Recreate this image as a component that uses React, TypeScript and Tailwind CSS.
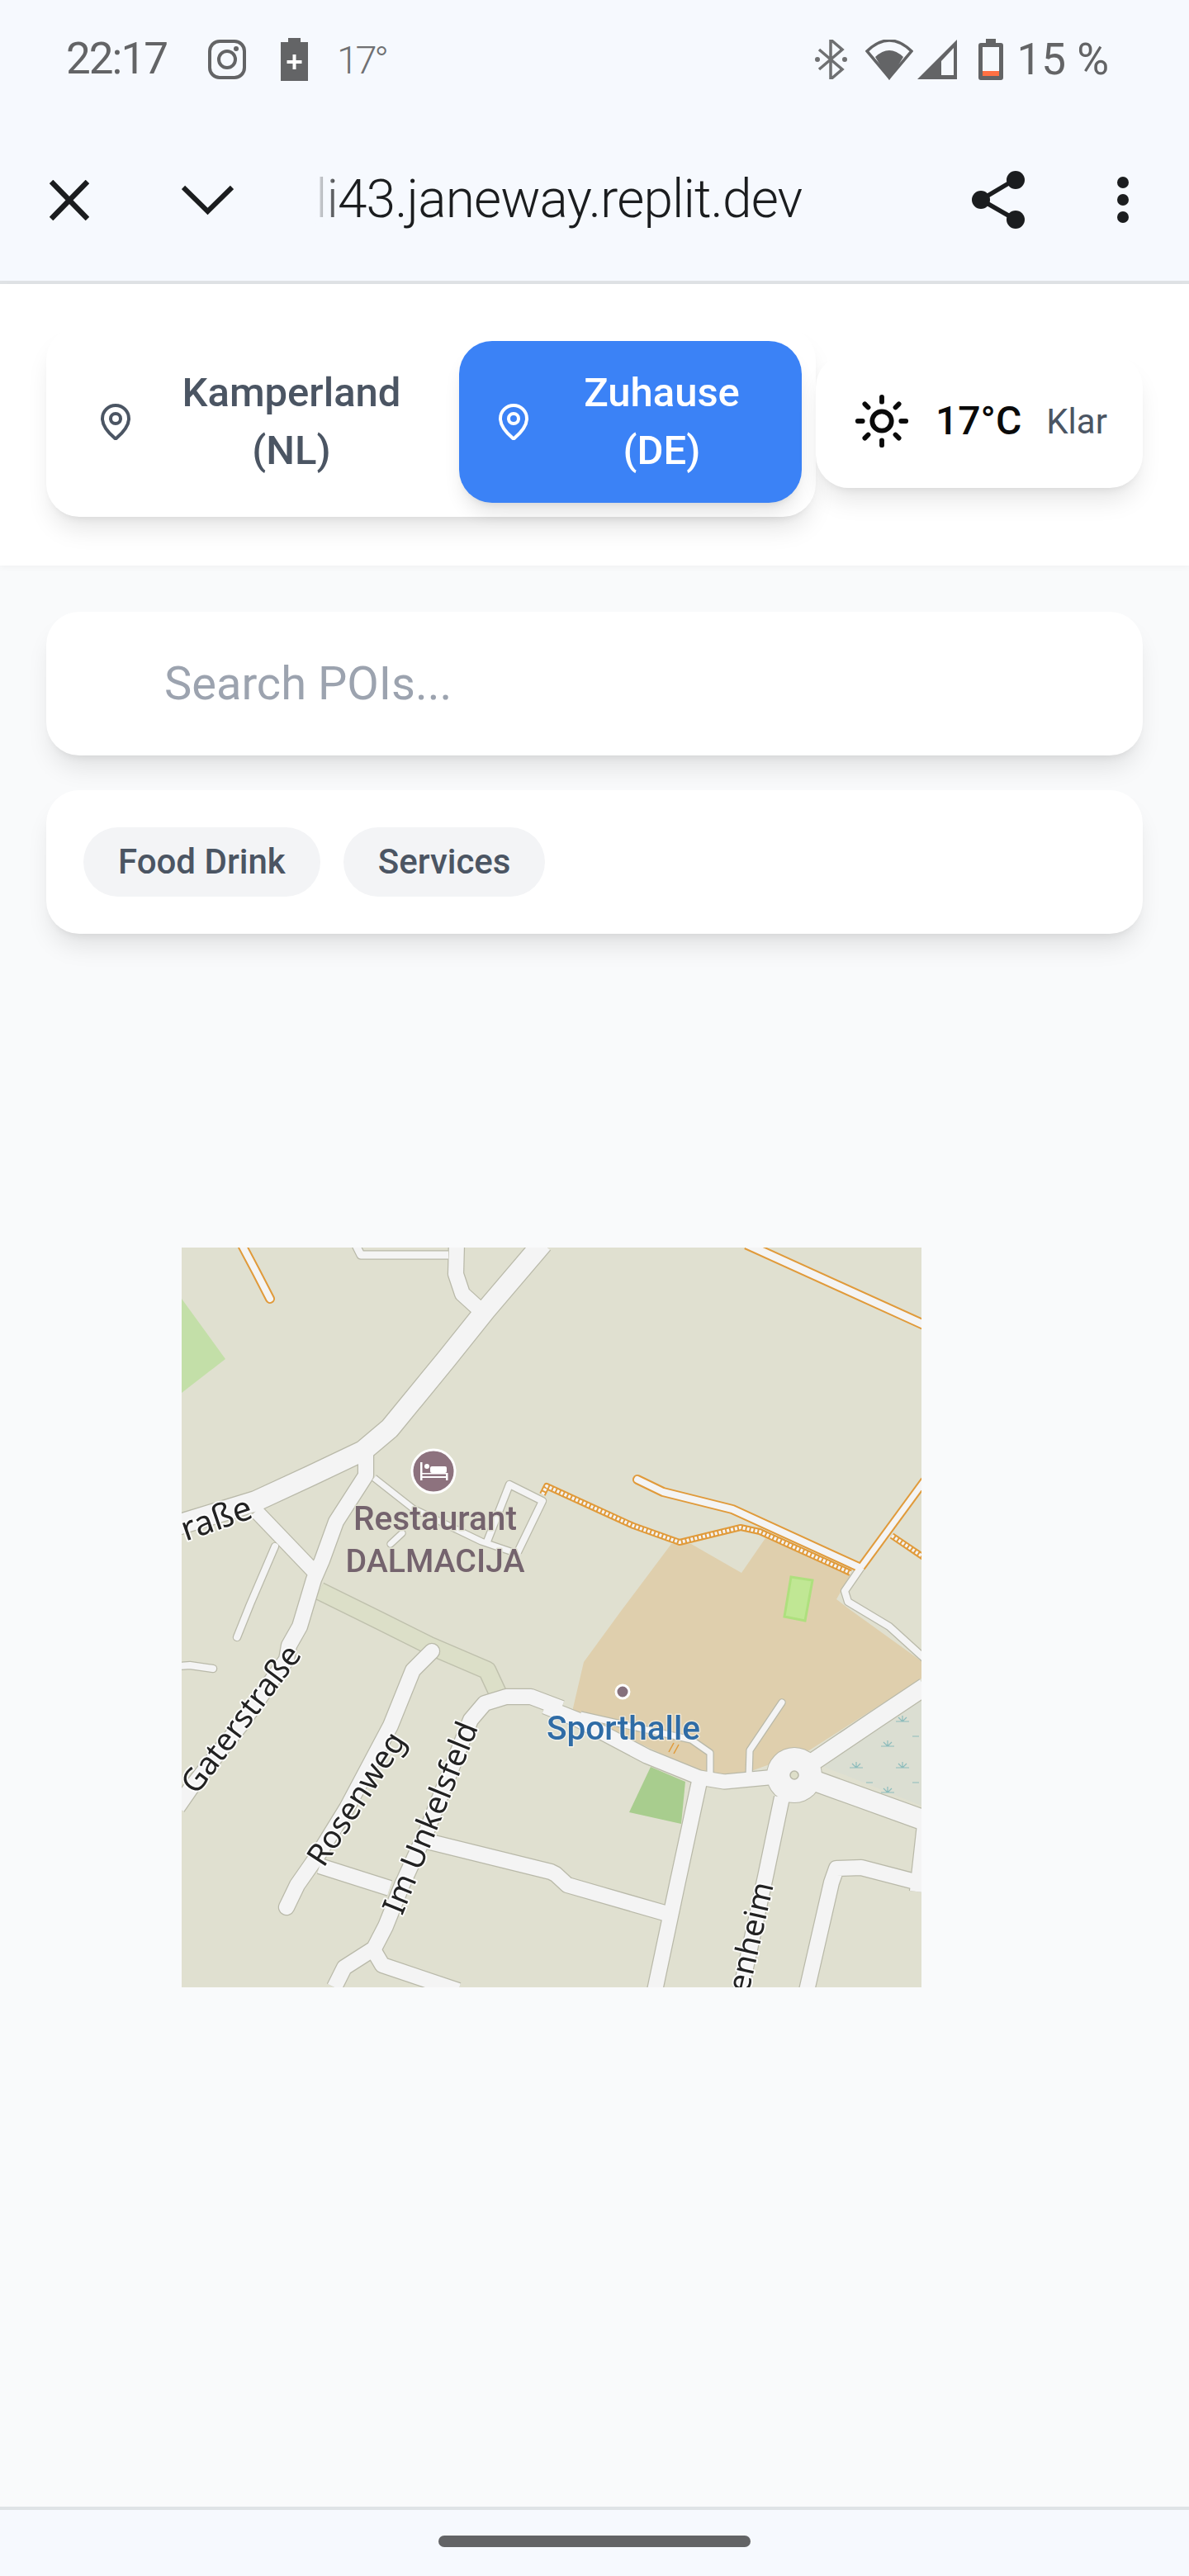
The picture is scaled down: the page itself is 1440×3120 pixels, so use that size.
import { MapPin, Sun } from "lucide-react";

const cardShadow = "shadow-[0_20px_30px_-6px_rgba(0,0,0,0.1),0_8px_12px_-8px_rgba(0,0,0,0.1)]";

function StatusBar() {
  return (
    <div className="flex h-[144px] items-center justify-between pl-[80px] pr-[97px] text-[#636466]">
      <div className="flex items-center">
        <span className="w-[122px] whitespace-nowrap text-[53px] tracking-[-2px]">22:17</span>
        <svg className="ml-[50px]" width="46" height="48" viewBox="0 0 46 48" fill="none" stroke="#636466" strokeWidth="4">
          <rect x="2" y="2" width="42" height="44" rx="12" />
          <ellipse cx="23" cy="24" rx="10" ry="10" />
          <circle cx="34" cy="11" r="3" fill="#636466" stroke="none" />
        </svg>
        <svg className="ml-[42px]" width="33" height="52" viewBox="0 0 33 52">
          <path d="M9 0h15v5h9v47H0V5h9z" fill="#636466" />
          <path d="M14.5 20h4v7h7v4h-7v7h-4v-7h-7v-4h7z" fill="#fff" />
        </svg>
        <span className="ml-[35px] text-[47px] font-light leading-none tracking-[-3.5px] text-[#6f7072]">17°</span>
      </div>
      <div className="flex items-center">
        <svg width="39" height="48" viewBox="0 0 39 48" fill="none" stroke="#6f7072" strokeWidth="3.5">
          <path d="M5 12l28 24-14 12V0l14 12L5 36" />
          <circle cx="3" cy="24" r="3" fill="#6f7072" stroke="none" />
          <circle cx="36" cy="24" r="3" fill="#6f7072" stroke="none" />
        </svg>
        <svg className="ml-[22px]" width="58" height="49" viewBox="0 0 58 49">
          <path d="M29 46L2 14Q29-12 56 14Z" fill="none" stroke="#636466" strokeWidth="3.5" />
          <path d="M29 49L12 21Q29 5 46 21Z" fill="#636466" />
        </svg>
        <svg className="ml-[5px]" width="48" height="48" viewBox="0 0 48 48">
          <path d="M0 48L48 0v48z" fill="#636466" />
          <path d="M29 26L44 10v33H29z" fill="#f6f9fe" />
        </svg>
        <svg className="ml-[26px]" width="30" height="50" viewBox="0 0 30 50">
          <path d="M9 0h12v5h6a3 3 0 013 3v39a3 3 0 01-3 3H3a3 3 0 01-3-3V8a3 3 0 013-3h6z" fill="#636466" />
          <rect x="5" y="10" width="20" height="35" fill="#f6f9fe" />
          <rect x="5" y="39" width="20" height="6" fill="#ff7043" />
        </svg>
        <span className="ml-[16px] whitespace-nowrap text-[53px] leading-none">15 %</span>
      </div>
    </div>
  );
}

function Toolbar() {
  return (
    <div className="flex h-[196px] items-center pl-[60px] text-[#1b1d1f]">
      <svg width="48" height="49" viewBox="0 0 48 49" fill="none" stroke="#1b1d1f" strokeWidth="6.5">
        <path d="M2 2l44 45M46 2L2 47" />
      </svg>
      <svg className="ml-[112px]" width="63" height="37" viewBox="0 0 63 37" fill="none" stroke="#1b1d1f" strokeWidth="6">
        <path d="M2 3l29.5 29L61 3" />
      </svg>
      <div className="relative ml-[99px] w-[600px] whitespace-nowrap text-[64px] font-light leading-none tracking-[-0.9px]">
        li43.janeway.replit.dev
        <div className="absolute inset-y-0 left-0 w-[30px] bg-gradient-to-r from-[#f6f9fe] to-transparent" />
      </div>
      <svg className="ml-[195px]" width="64" height="70" viewBox="0 0 64 70" fill="#1b1d1f">
        <path d="M53 10L11 35l42 24" fill="none" stroke="#1b1d1f" strokeWidth="5.5" />
        <circle cx="53" cy="11" r="11" />
        <circle cx="11" cy="35" r="11" />
        <circle cx="53" cy="59" r="11" />
      </svg>
      <svg className="ml-[112px]" width="14" height="56" viewBox="0 0 14 56" fill="#1b1d1f">
        <circle cx="7" cy="7" r="7" />
        <circle cx="7" cy="28" r="7" />
        <circle cx="7" cy="49" r="7" />
      </svg>
    </div>
  );
}

function LocationHeader() {
  return (
    <div className="relative flex h-[341px] items-start bg-white pl-[56px] pt-[52px] shadow-[0_2px_8px_rgba(0,0,0,0.04)]">
      <div className={`flex h-[230px] w-[932px] items-center rounded-[40px] bg-white pl-[16px] ${cardShadow}`}>
        <button className="flex h-[196px] w-[484px] items-center gap-[28px] rounded-[40px] pl-[44px] pr-[42px] text-[#4b5563]">
          <MapPin size={48} />
          <span className="flex-1 text-center text-[49px] font-medium leading-[70px]">
            Kamperland
            <br />
            (NL)
          </span>
        </button>
        <button className="flex h-[196px] w-[415px] items-center gap-[28px] rounded-[40px] bg-[#3b82f6] pl-[42px] pr-[42px] text-white shadow-[0_16px_24px_-6px_rgba(0,0,0,0.12),0_6px_10px_-6px_rgba(0,0,0,0.1)]">
          <MapPin size={48} />
          <span className="flex-1 text-center text-[49px] font-medium leading-[70px]">
            Zuhause
            <br />
            (DE)
          </span>
        </button>
      </div>
      <div className={`mt-[33px] flex h-[162px] w-[396px] items-center rounded-[40px] bg-white pl-[45px] ${cardShadow}`}>
        <Sun size={70} color="#0a0a0a" />
        <span className="ml-[30px] text-[48px] font-medium text-[#0a0a0a]">17°C</span>
        <span className="ml-[30px] text-[42px] text-[#4b5563]">Klar</span>
      </div>
    </div>
  );
}

type Road = { pts: string; w: number; cap?: "round" | "butt" };

const tracks = ["167,416 240,452 300,482 370,512 383,540"];

const greyRoads: Road[] = [
  { pts: "437,-5 368,76 320,136 252,219 220,246 157,276 90,307 -5,336", w: 24 },
  { pts: "333,-5 332,32 340,56 362,76", w: 18 },
  { pts: "210,-5 217,9 323,9", w: 9 },
  { pts: "223,250 223,276 187,332 170,379 160,402 143,459 130,482 127,499 70,580 13,652 -5,678", w: 18 },
  { pts: "90,319 160,392", w: 17 },
  { pts: "113,362 83,432 67,472", w: 8, cap: "round" },
  { pts: "-5,507 10,506 38,510", w: 8, cap: "round" },
  { pts: "233,279 280,316 363,356 410,372", w: 7 },
  { pts: "370,356 397,287 437,307 407,369", w: 8 },
  { pts: "267,346 253,359", w: 7, cap: "round" },
  { pts: "303,489 280,512 253,579 200,679 163,739 140,772 127,799", w: 18, cap: "round" },
  { pts: "167,749 252,776", w: 18 },
  { pts: "460,558 423,544 393,544 367,552 350,572 297,706 267,772 247,822 233,849 197,872 185,896", w: 18 },
  { pts: "233,852 243,869 335,900", w: 18 },
  { pts: "297,719 447,756 453,759 467,772 592,808", w: 18 },
  { pts: "440,556 480,572 563,616 627,642 657,647 710,642 742,639", w: 17 },
  { pts: "760,626 840,572 900,532", w: 21 },
  { pts: "767,646 900,694", w: 24 },
  { pts: "727,666 707,762 677,900", w: 18 },
  { pts: "628,642 600,772 573,900", w: 18 },
  { pts: "900,771 823,751 793,752 787,769 757,900", w: 18 },
  { pts: "900,690 890,780", w: 16 },
  { pts: "727,551 688,609 687,642", w: 7, cap: "round" },
  { pts: "483,566 617,596 640,612 640,642", w: 7 },
  { pts: "823,387 803,416 807,429 857,459 900,498", w: 8 },
];

const orangeRoads: Road[] = [
  { pts: "72,-5 90,29 107,62", w: 8, cap: "round" },
  { pts: "684,-4 900,94", w: 9 },
  { pts: "552,281 583,296 667,317 820,387", w: 8, cap: "round" },
  { pts: "823,387 900,282", w: 7 },
];

const dashedRoads = [
  "437,299 442,289 547,337 603,357 677,339 700,344 810,394",
  "860,349 900,376",
];

const tufts = [
  [873, 574],
  [855, 604],
  [817, 630],
  [873, 630],
  [855, 660],
];

function MapTile() {
  const halo = { paintOrder: "stroke" as const, strokeLinejoin: "round" as const };
  return (
    <svg className="ml-[220px] mt-[380px] blur-[0.6px]" width="896" height="896" viewBox="0 0 896 896" style={{ fontFamily: "'Noto Sans', sans-serif" }}>
      <rect width="896" height="896" fill="#e0e0d0" />
      <path d="M0 62L53 135 0 176Z" fill="#c3dfa8" />
      <path
        d="M593 359L533 439 487 502 473 562 653 647 760 609 896 522V501L810 439 793 426 810 396 707 352 678 394 617 359Z"
        fill="#dfcfad"
      />
      <path d="M568 629L610 647 605 698 542 684Z" fill="#a8cd8e" />
      <path d="M738 399L764 403 755 452 730 447Z" fill="#c0e794" stroke="#aee07e" strokeWidth="3" />
      <path d="M773 627L896 549V676Z" fill="#dbded2" />
      {tufts.map(([x, y]) => (
        <path key={`${x}-${y}`} d={`M${x - 8} ${y}h16M${x} ${y}v-7M${x} ${y}l-5-5M${x} ${y}l5-5`} stroke="#8dbcbc" strokeWidth="1.2" fill="none" />
      ))}
      <path d="M885 592h8M829 648h8M885 648h8" stroke="#8dbcbc" strokeWidth="1.2" />

      {tracks.map((pts) => (
        <g key={pts} fill="none" strokeLinejoin="round">
          <polyline points={pts} stroke="#bfc0ad" strokeWidth="23" />
          <polyline points={pts} stroke="#dcdfc8" strokeWidth="20" />
        </g>
      ))}

      <g fill="none" strokeLinejoin="round">
        <circle cx="742" cy="639" r="34" fill="#b9b9a9" />
        {greyRoads.map((r) => (
          <polyline key={r.pts} points={r.pts} stroke="#b9b9a9" strokeWidth={r.w + 2.5} strokeLinecap={r.cap ?? "butt"} />
        ))}
        {orangeRoads.map((r) => (
          <polyline key={r.pts} points={r.pts} stroke="#e09a3a" strokeWidth={r.w + 4} strokeLinecap={r.cap ?? "butt"} />
        ))}
        {dashedRoads.map((pts) => (
          <polyline key={pts} points={pts} stroke="#e09a3a" strokeWidth="8" />
        ))}
        {dashedRoads.map((pts) => (
          <polyline key={pts} points={pts} stroke="#f4f4f4" strokeWidth="4" strokeDasharray="3 2" />
        ))}
        {greyRoads.map((r) => (
          <polyline key={r.pts} points={r.pts} stroke="#f4f4f4" strokeWidth={r.w} strokeLinecap={r.cap ?? "butt"} />
        ))}
        {orangeRoads.map((r) => (
          <polyline key={r.pts} points={r.pts} stroke="#f4f4f4" strokeWidth={r.w} strokeLinecap={r.cap ?? "butt"} />
        ))}
        <circle cx="742" cy="639" r="33" fill="#f4f4f4" />
        <circle cx="742" cy="639" r="5" fill="#dedfc9" stroke="#b9b9a9" strokeWidth="1.5" />
        <path d="M590 611l6-11M596 613l6-11" stroke="#e09a3a" strokeWidth="1.5" />
      </g>

      {/* poi */}
      <circle cx="305" cy="271" r="26" fill="#8d727e" stroke="#fff" strokeWidth="3" />
      <g fill="#fff">
        <rect x="289" y="260" width="2.5" height="22" />
        <circle cx="297" cy="265" r="3" />
        <rect x="301" y="265" width="20" height="8" rx="2" />
        <rect x="291" y="273" width="30" height="1.5" />
        <rect x="291" y="277" width="31" height="2" />
        <rect x="320" y="273" width="2.5" height="9" />
      </g>
      <circle cx="534" cy="538" r="8" fill="#85707c" stroke="#fff" strokeWidth="3" />

      {/* labels */}
      <g fontFamily="Roboto, sans-serif" fontWeight="500" stroke="#e0e0d0" strokeWidth="3" style={halo}>
        <text x="307" y="342" textAnchor="middle" fontSize="40" fill="#74636d" textLength="198" lengthAdjust="spacingAndGlyphs">
          Restaurant
        </text>
        <text x="307" y="393" textAnchor="middle" fontSize="38" fill="#74636d" textLength="217" lengthAdjust="spacingAndGlyphs">
          DALMACIJA
        </text>
        <text x="535" y="596" textAnchor="middle" fontSize="40" fill="#2f6ca6" textLength="186" lengthAdjust="spacingAndGlyphs" stroke="#fff" strokeOpacity="0.5">
          Sporthalle
        </text>
      </g>
      <g fontSize="38" fill="#222" stroke="#fff" strokeOpacity="0.85" strokeWidth="4" style={halo}>
        <text transform="translate(88 327) rotate(-19)" textAnchor="end" fontSize="41">
          raße
        </text>
        <text transform="translate(18 664) rotate(-53)">Gaterstraße</text>
        <text transform="translate(172 752) rotate(-57)">Rosenweg</text>
        <text transform="translate(267 810) rotate(-68)">Im Unkelsfeld</text>
        <text transform="translate(717 772) rotate(-77)" textAnchor="end">
          enheim
        </text>
      </g>
    </svg>
  );
}

export default function App() {
  return (
    <div className="flex h-[3120px] w-[1440px] flex-col overflow-hidden bg-[#f9fafb] font-[Roboto,sans-serif]">
      <div className="h-[344px] border-b-4 border-[#e0e3e6] bg-[#f6f9fe]">
        <StatusBar />
        <Toolbar />
      </div>
      <LocationHeader />
      <div className="flex flex-col gap-[42px] px-[56px] pt-[56px]">
        <div className={`flex h-[174px] items-center rounded-[40px] bg-white pl-[143px] ${cardShadow}`}>
          <input
            className="w-full bg-transparent text-[56px] text-[#374151] outline-none placeholder:text-[#9ca3af]"
            placeholder="Search POIs..."
          />
        </div>
        <div className={`flex h-[174px] items-center gap-[28px] rounded-[40px] bg-white pl-[45px] ${cardShadow}`}>
          {["Food Drink", "Services"].map((c) => (
            <span key={c} className="flex h-[84px] items-center rounded-full bg-[#f3f4f6] px-[42px] pb-[2px] text-[42px] font-medium text-[#4b5563]">
              {c}
            </span>
          ))}
        </div>
      </div>
      <MapTile />
      <div className="mt-auto flex h-[84px] justify-center border-t-4 border-[#dfe3e6] bg-[#f6f9fe] pt-[31px]">
        <div className="h-[14px] w-[378px] rounded-full bg-[#636466]" />
      </div>
    </div>
  );
}
